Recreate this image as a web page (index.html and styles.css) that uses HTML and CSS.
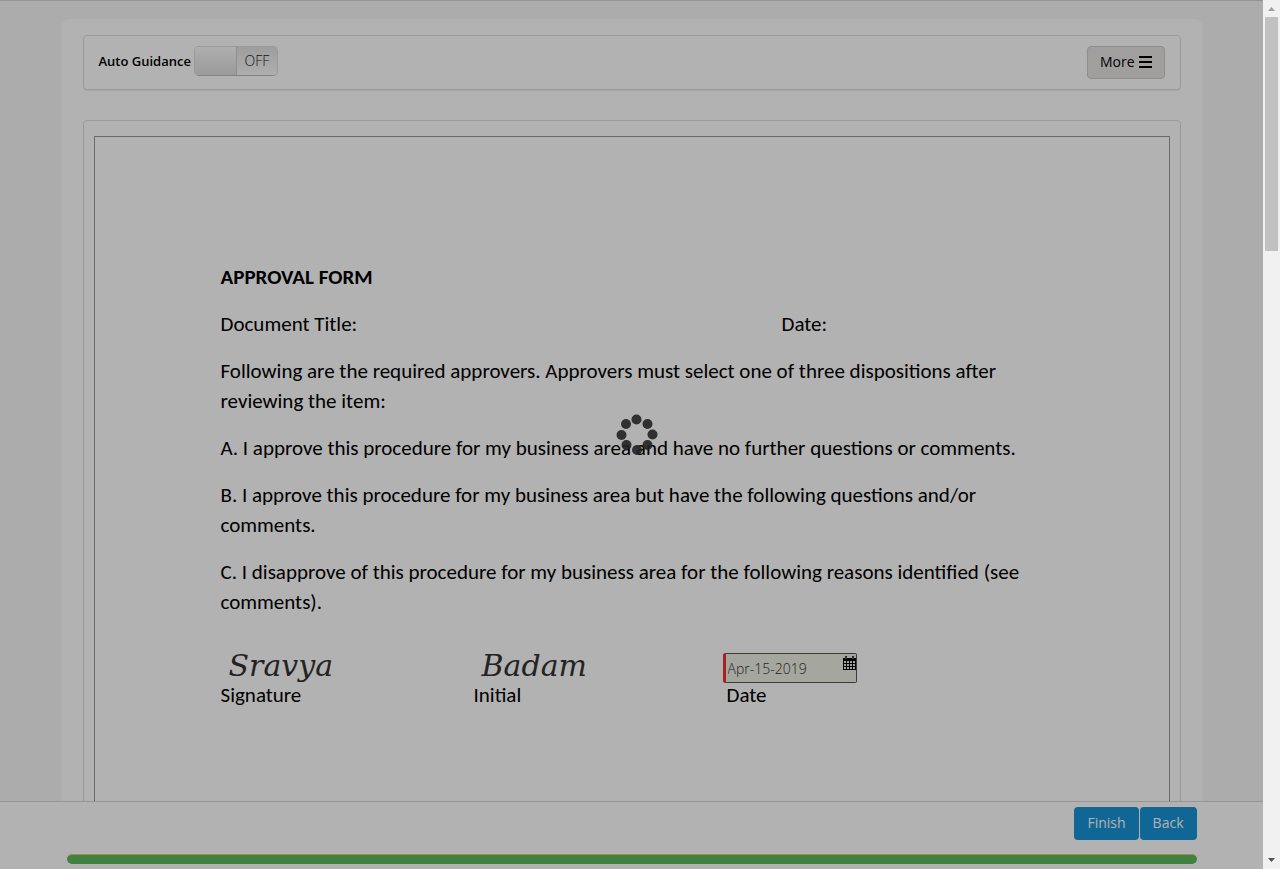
FILE: index.html
```html
<!DOCTYPE html>
<html lang="en">
<head>
<meta charset="utf-8">
<title>Approval Form</title>
<link rel="stylesheet" href="styles.css">
</head>
<body>
<div class="window">
  <div class="app">
    <main class="content">
      <div class="container">
        <section class="panel toolbar">
          <label class="guidance">Auto Guidance
            <input type="checkbox" class="switch-input">
            <span class="switch"><span class="switch-handle"></span><span class="switch-state">OFF</span></span>
          </label>
          <button type="button" class="more">More
            <svg width="13" height="12" viewBox="0 0 13 12" aria-hidden="true"><path d="M0 0h13v2H0zM0 5h13v2H0zM0 10h13v2H0z"/></svg>
          </button>
        </section>
        <section class="panel viewer">
          <article class="document">
            <h1>APPROVAL FORM</h1>
            <div class="meta"><span>Document Title:</span><span>Date:</span></div>
            <p>Following are the required approvers. Approvers must select one of three dispositions after<br>reviewing the item:</p>
            <p>A. I approve this procedure for my business area and have no further questions or comments.</p>
            <p>B. I approve this procedure for my business area but have the following questions and/or<br>comments.</p>
            <p>C. I disapprove of this procedure for my business area for the following reasons identified (see<br>comments).</p>
            <div class="signing">
              <div class="signer"><span class="ink">Sravya</span><span class="caption">Signature</span></div>
              <div class="signer"><span class="ink">Badam</span><span class="caption">Initial</span></div>
              <div class="signer">
                <span class="date-field">
                  <input type="text" id="sign-date" value="Apr-15-2019">
                  <svg class="calendar" width="13" height="14" viewBox="0 0 13 14" aria-hidden="true"><path fill-rule="evenodd" d="M0 2h2V1q0-1 1-1t1 1v1h5V1q0-1 1-1t1 1v1h2v12H0zM1 5v2h2V5zm3 0v2h2V5zm3 0v2h2V5zm3 0v2h2V5zM1 8v2h2V8zm3 0v2h2V8zm3 0v2h2V8zm3 0v2h2V8zM1 11v2h2v-2zm3 0v2h2v-2zm3 0v2h2v-2zm3 0v2h2v-2z"/><path d="M3 1v2M10 1v2" stroke="#fff" stroke-width=".6"/></svg>
                </span>
                <label class="caption date-caption" for="sign-date">Date</label>
              </div>
            </div>
          </article>
        </section>
      </div>
    </main>
    <footer class="footer">
      <div class="footer-inner">
        <div class="actions"><button type="button">Finish</button><button type="button">Back</button></div>
        <div class="progress" role="progressbar" aria-label="Progress" aria-valuenow="100"></div>
      </div>
    </footer>
    <div class="overlay"></div>
    <svg class="spinner" width="42" height="42" viewBox="0 0 42 42" role="img" aria-label="Loading">
      <circle cx="20.500" cy="5.500" r="5"/><circle cx="31.500" cy="10" r="5"/><circle cx="36.500" cy="20.500" r="5"/><circle cx="31.500" cy="31" r="5"/><circle cx="21" cy="36" r="5"/><circle cx="10.500" cy="31" r="5"/><circle cx="5.500" cy="21" r="5"/><circle cx="10" cy="10" r="5"/>
    </svg>
  </div>
  <div class="scrollbar" aria-hidden="true">
    <svg width="17" height="17" viewBox="0 0 17 17"><path fill="#a0a0a0" d="M5 11h7L8.500 7z"/></svg>
    <div class="thumb"></div>
    <svg class="scroll-down" width="17" height="17" viewBox="0 0 17 17"><path fill="#505050" d="M5 6h7l-3.500 4z"/></svg>
  </div>
</div>
</body>
</html>
```
FILE: styles.css
```css
* { box-sizing: border-box; }
body { margin: 0; font: 14px/20px "Open Sans", "Noto Sans", sans-serif; color: #000; }
button, input { font: inherit; }

.window { display: flex; height: 100vh; overflow: hidden; }
.app { position: relative; flex: 1; display: flex; flex-direction: column; min-width: 0; background: #f6f6f6; }
.content { flex: 1; min-height: 0; overflow: hidden; border-top: 1px solid #d4d4d4; padding-top: 18px; }
.container { max-width: 1140px; margin: 0 auto; padding: 16px 21px; background: #fff; border-radius: 6px; }
.panel { border: 1px solid #ddd; border-radius: 4px; background: #fff; box-shadow: 0 1px 1px rgba(0, 0, 0, .05); }

.toolbar { display: flex; justify-content: space-between; align-items: flex-start; padding: 10px 15px; margin-bottom: 30px; }
.guidance { position: relative; display: flex; align-items: center; gap: 3px; font-size: 13px; font-weight: 600; }
.switch-input { position: absolute; right: 0; width: 84px; height: 30px; margin: 0; opacity: 0; }
.switch { display: flex; width: 84px; height: 30px; border: 1px solid #ddd; border-bottom-color: #bbb; border-radius: 5px; overflow: hidden; }
.switch-handle { width: 42px; border-right: 1px solid #ccc; background: linear-gradient(#fafafa, #dedede); }
.switch-state { flex: 1; text-align: center; font-size: 14px; line-height: 28px; font-weight: 300; color: #222; background: linear-gradient(#e2e2e2, #fafafa); }
.more { display: flex; align-items: center; gap: 4px; height: 33px; padding: 0 12px 2px; border: 1px solid #ccc; border-radius: 4px; background: #e7e3e3; font-size: 14px; color: #000; }

.viewer { padding: 15px 10px; }
.document { border: 1px solid #999; height: 1400px; padding: 125px 126px; font: 21px/30px Carlito, Calibri, Lato, sans-serif; }
.document h1 { margin: 0 0 17px; font-size: inherit; line-height: 30px; font-weight: 700; }
.document p { margin: 0 0 17px; white-space: nowrap; }
.meta { display: grid; grid-template-columns: 561px 1fr; margin-bottom: 17px; }
.signing { display: grid; grid-template-columns: 253px 249px 1fr; margin-top: 36px; }
.signer { display: flex; flex-direction: column; }
.ink { height: 30px; padding-left: 8px; font: italic 30px/26px "DejaVu Serif", serif; color: #333; }
.caption { line-height: 24px; }
.date-caption { padding-left: 4px; }
.date-field { position: relative; width: 134px; height: 30px; }
.date-field input { display: block; width: 100%; height: 30px; padding: 0 4px 0 2px; border: 1px solid #555; border-left: 3px solid #f03030; border-radius: 2px; background: #edeee2; font: 300 14px/20px "Open Sans", sans-serif; color: #333; }
.calendar { position: absolute; top: 3px; right: 1px; }

.footer { border-top: 1px solid #d4d4d4; background: #fff; }
.footer-inner { max-width: 1140px; margin: 0 auto; padding: 5px; }
.actions { display: flex; justify-content: flex-end; gap: 1px; margin-bottom: 14px; }
.actions button { height: 33px; padding: 0 13px 2px; border: 0; border-radius: 4px; background: #1893d6; color: #fff; }
.progress { height: 10px; border-top: 1px solid #e0ca60; border-radius: 5px; background: #5cb85c; }

.overlay { position: absolute; inset: 0; background: rgba(0, 0, 0, .3); }
.spinner { position: absolute; left: calc(50% - 16px); top: calc(50% - 21px); fill: #222; opacity: .9; }

.scrollbar { display: flex; flex-direction: column; width: 17px; background: #f1f1f1; }
.thumb { width: 13px; height: 234px; margin-left: 2px; background: #c1c1c1; }
.scroll-down { margin-top: auto; }
```
